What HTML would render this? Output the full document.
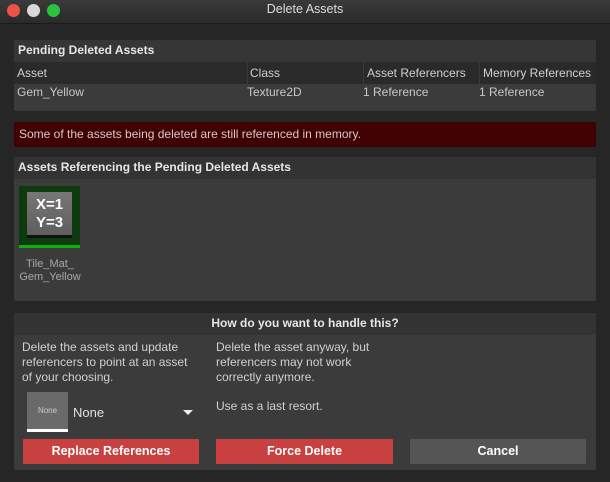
<!DOCTYPE html>
<html><head><style>
*{margin:0;padding:0;box-sizing:border-box}
body{width:610px;height:482px;background:#262626;font-family:"Liberation Sans",sans-serif;color:#c8c8c8;font-size:12px;position:relative;overflow:hidden}
.abs{position:absolute}
.title{left:0;top:0;width:610px;height:24px;background:linear-gradient(#3a3a3a,#2a2a2a);border-bottom:1px solid #1a1a1a;text-align:center;line-height:18px;color:#ddd;font-size:12.5px}
.dot{width:13px;height:13px;border-radius:50%;top:4px}
.panel{background:#3b3b3b;border-radius:2px}
.hdr{background:#333;height:22px;line-height:21px;padding-left:4px;font-weight:bold;color:#e6e6e6;font-size:12px}
.btn{height:25px;line-height:25px;text-align:center;font-weight:bold;color:#fff;font-size:12.5px;border-radius:1px}
</style></head><body>
<div class="abs title">Delete Assets</div>
<div class="abs dot" style="left:7px;background:#f0504a"></div>
<div class="abs dot" style="left:27px;background:#d8d8d8"></div>
<div class="abs dot" style="left:47px;background:#2ac33d"></div>

<div class="abs panel" style="left:14px;top:40px;width:582px;height:71px">
 <div class="hdr" style="background:#363636">Pending Deleted Assets</div>
 <div style="height:22px;background:#2a2a2a;position:relative;line-height:22px;color:#d0d0d0">
  <span class="abs" style="left:3px">Asset</span>
  <span class="abs" style="left:233px;border-left:1px solid #3a3a3a;padding-left:2px;height:22px">Class</span>
  <span class="abs" style="left:349px;border-left:1px solid #3a3a3a;padding-left:3px;height:22px">Asset Referencers</span>
  <span class="abs" style="left:465px;border-left:1px solid #3a3a3a;padding-left:3px;height:22px">Memory References</span>
 </div>
 <div style="position:relative;height:20px;line-height:16px">
  <span class="abs" style="left:3px">Gem_Yellow</span>
  <span class="abs" style="left:233px">Texture2D</span>
  <span class="abs" style="left:349px">1 Reference</span>
  <span class="abs" style="left:465px">1 Reference</span>
 </div>
</div>

<div class="abs" style="left:14px;top:122px;width:582px;height:25px;background:#3f0102;border-radius:2px;line-height:24px;padding-left:5px;color:#d8c8c8">Some of the assets being deleted are still referenced in memory.</div>

<div class="abs panel" style="left:14px;top:157px;width:582px;height:144px">
 <div class="hdr">Assets Referencing the Pending Deleted Assets</div>
</div>
<div class="abs" style="left:19px;top:186px;width:61px;height:62px;background:#0e3a10;border-bottom:3px solid #0cb00c"></div>
<div class="abs" style="left:27px;top:192px;width:45px;height:46px;background:linear-gradient(#777,#5e5e5e);border-bottom:3px solid #111;color:#fff;font-weight:bold;font-size:15px;text-align:center;line-height:18px;padding-top:4px">X=1<br>Y=3</div>
<div class="abs" style="left:14px;top:258px;width:72px;text-align:center;color:#a8a8a8;font-size:11px;line-height:13px">Tile_Mat_<br>Gem_Yellow</div>

<div class="abs panel" style="left:14px;top:313px;width:582px;height:157px">
 <div class="hdr" style="text-align:center;padding:0">How do you want to handle this?</div>
</div>
<div class="abs" style="left:22px;top:340px;line-height:15px;color:#d0d0d0">Delete the assets and update<br>referencers to point at an asset<br>of your choosing.</div>
<div class="abs" style="left:216px;top:340px;line-height:15px;color:#d0d0d0">Delete the asset anyway, but<br>referencers may not work<br>correctly anymore.</div>
<div class="abs" style="left:216px;top:399px;color:#d0d0d0">Use as a last resort.</div>
<div class="abs" style="left:27px;top:392px;width:41px;height:40px;background:#6a6a6a;border-bottom:3px solid #fff;color:#ccc;font-size:8px;text-align:center;line-height:38px">None</div>
<div class="abs" style="left:73px;top:405px;color:#e0e0e0;font-size:13px">None</div>
<div class="abs" style="left:183px;top:410px;width:0;height:0;border-left:5px solid transparent;border-right:5px solid transparent;border-top:5px solid #eee"></div>
<div class="abs btn" style="left:23px;top:439px;width:176px;background:#c8403f">Replace References</div>
<div class="abs btn" style="left:216px;top:439px;width:177px;background:#c8403f">Force Delete</div>
<div class="abs btn" style="left:410px;top:439px;width:176px;background:#555">Cancel</div>
</body></html>
